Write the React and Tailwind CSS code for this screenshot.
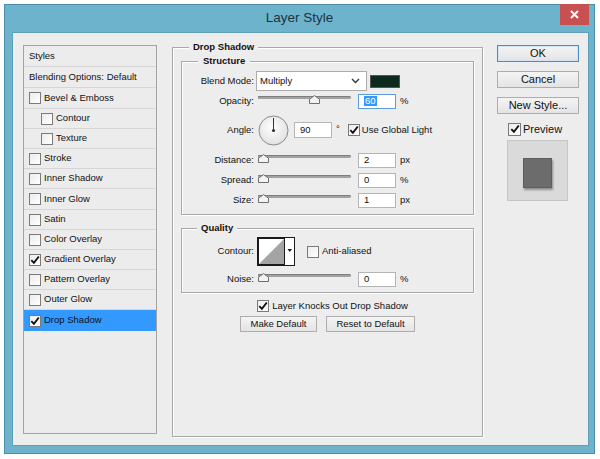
import React from 'react';

// --- Shared bits ---

const Check = ({ checked, className = '' }) => (
  <span
    className={`flex items-center justify-center w-[12px] h-[12px] border border-[#7a7a7a] bg-gradient-to-br from-[#ececec] to-white shrink-0 ${className}`}
  >
    {checked && (
      <svg width="10" height="10" viewBox="0 0 10 10">
        <path d="M1.3 5.2 L3.9 7.9 L8.8 1.5" fill="none" stroke="#111" strokeWidth="1.9" />
      </svg>
    )}
  </span>
);

const Group = ({ title, legendClass, className = '', children }) => (
  <div className={`relative border border-[#a9a9a9] shadow-[inset_1px_1px_0_#fff,1px_1px_0_#fff] ${className}`}>
    <span className={`absolute -top-[8px] bg-[#ededed] font-bold leading-[14px] ${legendClass}`}>{title}</span>
    {children}
  </div>
);

const Slider = ({ pos }) => (
  <div className="relative w-[93px] h-[12px] ml-[4px]">
    <div className="absolute left-0 right-0 top-[1px] h-[3px] bg-[#a2a2a2] border-t border-[#7e7e7e] rounded-r-[2px]" />
    <svg className="absolute top-0" style={{ left: pos }} width="11" height="9" viewBox="0 0 11 9">
      <path d="M0.5 8.5 V4.2 L5.5 0.6 L10.5 4.2 V8.5 Z" fill="#f3f3f3" stroke="#6e6e6e" />
    </svg>
  </div>
);

const NumBox = ({ value, focused }) => (
  <div
    className={`ml-[7px] w-[38px] h-[15px] bg-white flex items-center pl-[5px] border ${
      focused ? 'border-[#5a9bd8]' : 'border-[#b5b5b5]'
    }`}
  >
    {focused ? <span className="bg-[#3399ff] text-white px-px leading-[10px]">{value}</span> : value}
  </div>
);

const Label = ({ children }) => <span className="w-[72px] text-right shrink-0">{children}</span>;

const SliderRow = ({ label, pos, value, unit, focused }) => (
  <div className="flex items-center h-[20px]">
    <Label>{label}</Label>
    <Slider pos={pos} />
    <NumBox value={value} focused={focused} />
    <span className="ml-[4px]">{unit}</span>
  </div>
);

const Btn = ({ children, className = '' }) => (
  <div
    className={`flex items-center justify-center border border-[#adadad] bg-gradient-to-b from-[#f4f4f4] to-[#e4e4e4] ${className}`}
  >
    {children}
  </div>
);

// --- Left style list ---

const styles = [
  { label: 'Bevel & Emboss', h: 'h-[21px]' },
  { label: 'Contour', h: 'h-[20px]', indent: true },
  { label: 'Texture', h: 'h-[20px]', indent: true },
  { label: 'Stroke', h: 'h-[20px]' },
  { label: 'Inner Shadow', h: 'h-[20px]' },
  { label: 'Inner Glow', h: 'h-[21px]' },
  { label: 'Satin', h: 'h-[20px]' },
  { label: 'Color Overlay', h: 'h-[20px]' },
  { label: 'Gradient Overlay', h: 'h-[20px]', checked: true },
  { label: 'Pattern Overlay', h: 'h-[20px]' },
  { label: 'Outer Glow', h: 'h-[20px]' },
  { label: 'Drop Shadow', h: 'h-[21px]', checked: true, active: true },
];

const StyleList = () => (
  <div className="ml-[10px] w-[134px] h-[389px] border border-[#a3a3a3] bg-[#ececec] flex flex-col shrink-0">
    <div className="h-[21px] flex items-center pl-[5px] border-b border-[#d6d6d6]">Styles</div>
    <div className="h-[21px] flex items-center pl-[5px] border-b border-[#d6d6d6]">Blending Options: Default</div>
    {styles.map((s) => (
      <div
        key={s.label}
        className={`${s.h} flex items-center gap-[3px] ${s.indent ? 'pl-[17px]' : 'pl-[5px]'} ${
          s.active ? 'bg-[#3399ff]' : 'border-b border-[#d6d6d6]'
        }`}
      >
        <Check checked={s.checked} className="w-[11px] h-[11px]" />
        <span>{s.label}</span>
      </div>
    ))}
  </div>
);

// --- Main panel ---

const Dial = () => (
  <svg className="ml-[4px]" width="31" height="31" viewBox="0 0 31 31">
    <defs>
      <radialGradient id="dg" cx="0.45" cy="0.4" r="0.7">
        <stop offset="0" stopColor="#ffffff" />
        <stop offset="1" stopColor="#dcdcdc" />
      </radialGradient>
    </defs>
    <circle cx="15.5" cy="15.5" r="14.5" fill="url(#dg)" stroke="#8a8a8a" />
    <line x1="15.5" y1="15.5" x2="15.5" y2="3" stroke="#333" strokeWidth="1" />
    <circle cx="15.5" cy="15.5" r="1.6" fill="#333" />
  </svg>
);

const ContourPicker = () => (
  <svg className="ml-[3px]" width="38" height="29" viewBox="0 0 38 29">
    <rect x="0.5" y="0.5" width="37" height="28" fill="#fff" stroke="#1a1a1a" />
    <rect x="1.5" y="1.5" width="26" height="26" fill="none" stroke="#1a1a1a" />
    <path d="M2 27 L27 2 L27 27 Z" fill="#a4a4a4" />
    <path d="M30.5 12 L35 12 L32.75 15 Z" fill="#1a1a1a" />
  </svg>
);

const MainPanel = () => (
  <Group title="Drop Shadow" legendClass="left-[16px] px-[4px]" className="ml-[15px] mt-[2px] w-[311px] h-[390px] shrink-0">
    <div className="px-[8px] mt-[13px]">
      <Group title="Structure" legendClass="left-[16px] px-[5px]" className="pt-[9px] pb-[4px]">
        <div className="flex items-center h-[20px]">
          <Label>Blend Mode:</Label>
          <div className="ml-[2px] w-[111px] h-[20px] bg-white border border-[#acacac] flex items-center justify-between pl-[3px] pr-[6px]">
            <span>Multiply</span>
            <svg width="9" height="6" viewBox="0 0 9 6">
              <path d="M1 1 L4.5 4.5 L8 1" fill="none" stroke="#333" strokeWidth="1.4" />
            </svg>
          </div>
          <div className="ml-[3px] w-[30px] h-[13px] bg-[#0e2a1f] border border-[#555]" />
        </div>
        <SliderRow label="Opacity:" pos={51} value="60" unit="%" focused />
        <div className="flex items-center h-[30px] mt-[4px]">
          <Label>Angle:</Label>
          <Dial />
          <div className="ml-[5px] w-[38px] h-[16px] bg-white border border-[#b5b5b5] flex items-center pl-[5px]">90</div>
          <span className="ml-[4px] self-start mt-[7px]">°</span>
          <Check checked className="ml-[8px]" />
          <span className="ml-[2px]">Use Global Light</span>
        </div>
        <div className="mt-[5px]">
          <SliderRow label="Distance:" pos={0} value="2" unit="px" />
          <SliderRow label="Spread:" pos={0} value="0" unit="%" />
          <SliderRow label="Size:" pos={0} value="1" unit="px" />
        </div>
      </Group>

      <Group title="Quality" legendClass="left-[15px] px-[4px]" className="mt-[13px] pt-[8px] pb-[3px]">
        <div className="flex items-center h-[29px]">
          <Label>Contour:</Label>
          <ContourPicker />
          <Check className="ml-[12px]" />
          <span className="ml-[3px]">Anti-aliased</span>
        </div>
        <div className="mt-[3px]">
          <SliderRow label="Noise:" pos={0} value="0" unit="%" />
        </div>
      </Group>
    </div>

    <div className="flex items-center justify-center gap-[3px] mt-[7px] h-[12px] pl-[10px]">
      <Check checked />
      <span>Layer Knocks Out Drop Shadow</span>
    </div>
    <div className="flex justify-center gap-[9px] mt-[4px]">
      <Btn className="w-[77px] h-[16px]">Make Default</Btn>
      <Btn className="w-[89px] h-[16px]">Reset to Default</Btn>
    </div>
  </Group>
);

// --- Right column ---

const RightColumn = () => (
  <div className="ml-[14px] w-[82px] flex flex-col text-[11px] shrink-0">
    <Btn className="h-[17px] !border-[#4a8cc4] shadow-[inset_0_0_0_1px_#cfe4f7]">OK</Btn>
    <Btn className="h-[17px] mt-[9px]">Cancel</Btn>
    <Btn className="h-[17px] mt-[9px]">New Style...</Btn>
    <div className="flex items-center gap-[2px] mt-[8px] ml-[11px] h-[14px]">
      <Check checked className="w-[13px] h-[13px]" />
      <span>Preview</span>
    </div>
    <div className="mt-[4px] ml-[10px] w-[61px] h-[61px] bg-[#dadada] border border-[#c6c6c6] flex justify-center">
      <div className="mt-[17px] w-[29px] h-[30px] bg-[#6c6c6c] border border-[#5e5e5e] shadow-[1px_2px_2px_rgba(0,0,0,0.35)]" />
    </div>
  </div>
);

export default function App() {
  return (
    <div className="w-[600px] h-[459px] bg-white pt-[4px] pl-[4px] overflow-hidden font-['Liberation_Sans',Arial,sans-serif] text-[#111]">
      <div className="relative w-[591px] h-[450px] bg-[#6db3cc] border border-[#4a8ea7] flex flex-col">
        <div className="h-[27px] flex items-center justify-center text-[13.5px] text-[#1d3441]">Layer Style</div>
        <div className="absolute -top-px right-[5px] w-[29px] h-[21px] bg-[#c75050] flex items-center justify-center">
          <svg width="9" height="9" viewBox="0 0 9 9">
            <path d="M1 1 L8 8 M8 1 L1 8" stroke="#fff" strokeWidth="2" />
          </svg>
        </div>
        <div className="ml-[7px] w-[577px] h-[414px] bg-[#ededed] border border-[#5f9fb7] flex items-start pt-[12px] text-[9.5px]">
          <StyleList />
          <MainPanel />
          <RightColumn />
        </div>
      </div>
    </div>
  );
}
